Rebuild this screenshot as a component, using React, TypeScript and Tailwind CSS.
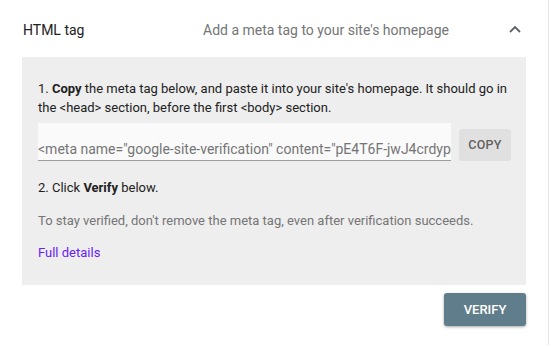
const App = () => {
  return (
    <div className="w-[553px] h-[348px] bg-white font-['Roboto',sans-serif] text-[#212121]">
      <div className="w-[549px] h-[345px] border-r border-[#e6e6e6]">
        <div className="flex items-center h-[57px] pl-[23px]">
          <div className="w-[180px] text-[14px] mt-[3px]">HTML tag</div>
          <div className="flex-1 text-[14px] text-[#757575] mt-[3px]">
            Add a meta tag to your site's homepage
          </div>
          <svg
            className="w-[12px] h-[8px] mr-[27px] mt-[1px]"
            viewBox="0 0 12 8"
            fill="none"
            stroke="#5f6368"
            strokeWidth="1.8"
          >
            <polyline points="1,7 6,2 11,7" />
          </svg>
        </div>

        <div className="ml-[22px] w-[504px] h-[228px] bg-[#eeeeee] pl-4 pr-[14px] pt-[22px]">
          <p className="text-[13px] leading-[19px]">
            1. <b className="font-bold">Copy</b> the meta tag below, and paste it into your site's
            homepage. It should go in the &lt;head&gt; section, before the first &lt;body&gt;
            section.
          </p>

          <div className="flex items-end mt-[6px]">
            <div className="w-[413px] h-[38px] bg-[#fafafa] border-b border-[#9e9e9e] overflow-hidden flex items-end">
              <span className="whitespace-nowrap text-[14px] text-[#757575] leading-[20px] pb-[1px]">
                &lt;meta name="google-site-verification" content="pE4T6F-jwJ4crdypXk2vN9q"
              </span>
            </div>
            <button className="ml-2 w-[52px] h-[32px] bg-[#e0e0e0] rounded-[3px] text-[12.5px] font-medium text-[#616161] tracking-[0.3px]">
              COPY
            </button>
          </div>

          <p className="text-[13px] leading-[19px] mt-[17px]">
            2. Click <b className="font-bold">Verify</b> below.
          </p>
          <p className="text-[13px] leading-[19px] mt-[14px] text-[#757575]">
            To stay verified, don't remove the meta tag, even after verification succeeds.
          </p>
          <p className="text-[13px] leading-[19px] mt-[13px]">
            <a className="text-[#6a1cf5] cursor-pointer">Full details</a>
          </p>
        </div>

        <div className="flex justify-end w-[526px] mt-[8px]">
          <button className="w-[82px] h-[33px] bg-[#607d8b] text-white text-[13px] font-medium rounded-[3px] shadow-[0_1px_3px_rgba(0,0,0,0.35)]">
            VERIFY
          </button>
        </div>
      </div>
    </div>
  );
};

export default App;
